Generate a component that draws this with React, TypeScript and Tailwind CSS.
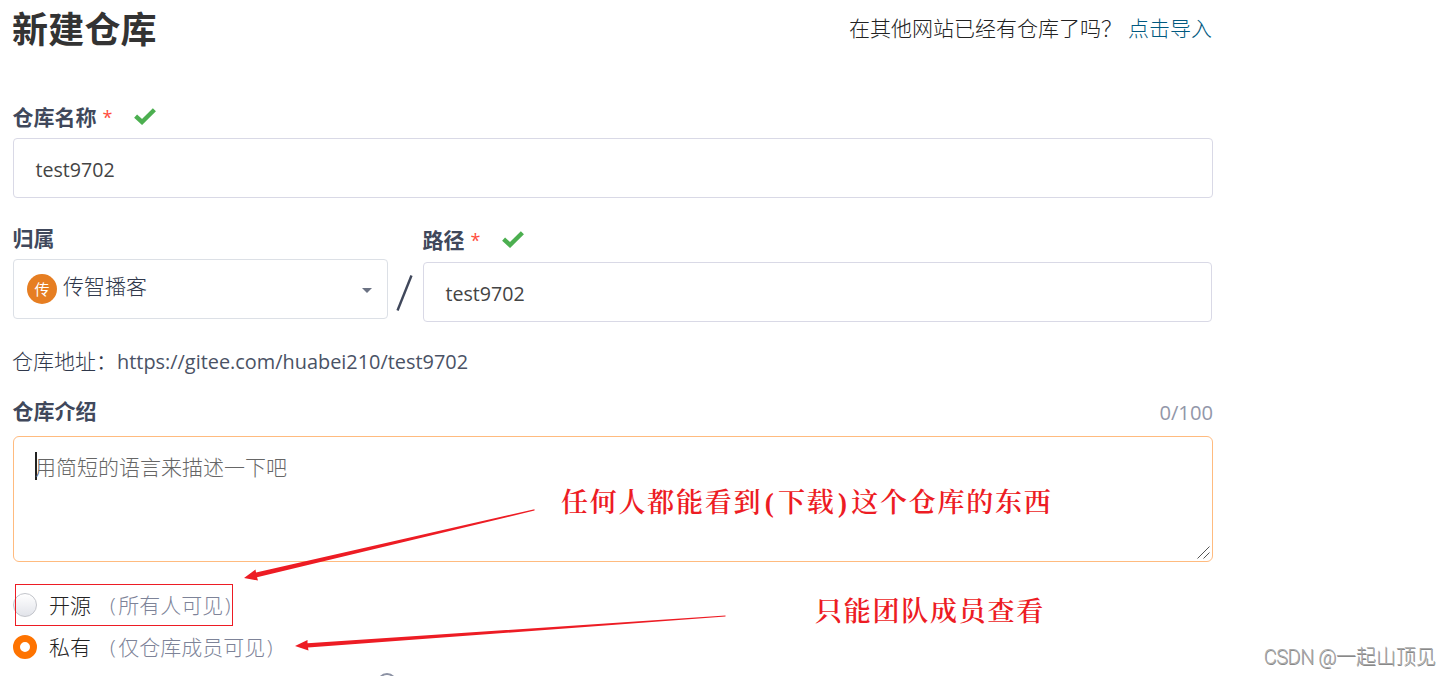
import React from 'react'
import clsx from 'clsx'

const Check = () => (
  <svg width="22" height="17" viewBox="0 0 22 17" fill="none" stroke="#4caf50" strokeWidth="4.4" className="-mt-0.5">
    <path d="M1.6 8.2 L8 14 L20.4 1.8" />
  </svg>
)

type LabelProps = {
  text: string
  className: string
  required?: boolean
}

const Label = ({ text, className, required }: LabelProps) => (
  <div className={clsx('flex items-center pb-0.5 font-bold', className)}>
    <span className="-ml-[0.5px]">{text}</span>
    {required && (
      <>
        <span className="ml-1.5 mr-[22px] text-lg leading-none font-normal text-[#ff4d3d]">*</span>
        <Check />
      </>
    )}
  </div>
)

const TextBox = ({ value }: { value: string }) => (
  <div className="flex h-15 items-center rounded border border-[#d9d9e6] px-[21px] text-[19.6px] text-[#444]">
    <span className="mt-1 ml-[0.5px]">{value}</span>
  </div>
)

type RadioProps = {
  text: string
  hint: string
  checked?: boolean
}

const Radio = ({ text, hint, checked }: RadioProps) => (
  <div className="flex h-[42px] items-center font-light">
    <span
      className={clsx(
        'h-6 w-6 rounded-full',
        checked ? 'border-[7px] border-[#fe7300] bg-white' : 'border border-[#c3c5cb] bg-linear-to-b from-white to-[#e2e4ea]'
      )}
    />
    <span className="mt-px ml-3 text-[#222]">{text}</span>
    <span className="mt-px ml-[19px] text-[#7d8398]">
      <span className="mr-[2.5px]">(</span>
      {hint}
      <span className="ml-[1.5px]">)</span>
    </span>
  </div>
)

const Arrows = () => (
  <svg className="absolute left-0 top-0" width="1451" height="676" viewBox="0 0 1451 676" fill="#ed1c24">
    <path d="M534.5 509.3 L256 572.5 L255.500 569.500 L244 578 L258 580.500 L257 577.300 L310 564.500 L534.500 510.600 Z" />
    <path d="M725.500 615.400 L307.500 643.300 L307.500 640 L295 646 L308.500 650.500 L308 647.600 L725.500 616.600 Z" />
  </svg>
)

const App = () => {
  return (
    <div className="relative h-[676px] w-full overflow-hidden bg-white font-['Open_Sans','Noto_Sans_CJK_SC',sans-serif] text-[21px] leading-none text-[#40485b]">
      <div className="ml-[13px] w-[1200px]">
        <div className="flex h-15 items-center justify-between text-[#333]">
          <h1 className="-ml-px text-4xl leading-none font-bold tracking-[0.2px]">新建仓库</h1>
          <p className="mb-1 mr-px font-light text-[#222]">
            在其他网站已经有仓库了吗？
            <a className="ml-1.5 text-[#005980]">点击导入</a>
          </p>
        </div>

        <Label text="仓库名称" className="mt-[38px] h-10" required />
        <TextBox value="test9702" />

        <div className="flex">
          <div className="w-[375px] pt-[21px]">
            <Label text="归属" className="h-10" />
            <div className="flex h-15 items-center rounded-sm border border-[#dce0e6] pl-[13px] pr-[15px]">
              <span className="flex h-[30px] w-[30px] items-center justify-center rounded-full bg-[#e67e22] text-[15px] text-white">
                传
              </span>
              <span className="mb-1.5 ml-1.5 flex-1 font-light text-[#30384b]">传智播客</span>
              <span className="mt-0.5 border-x-[5.5px] border-t-[5.5px] border-x-transparent border-t-[#6b7283]" />
            </div>
          </div>
          <div className="flex w-[35px] justify-center pr-[3px] pt-[76px]">
            <svg width="17" height="38" viewBox="0 0 17 38" stroke="#40485b" strokeWidth="2.4">
              <path d="M1.500 36.500 L15.500 1.500" />
            </svg>
          </div>
          <div className="w-[789px] pt-[22px]">
            <Label text="路径" className="h-[42px]" required />
            <TextBox value="test9702" />
          </div>
        </div>

        <div className="mt-[19px] -ml-px flex h-10 items-center font-light text-[#30384b]">
          仓库地址：
          <span className="mt-px text-[19.9px] font-normal text-[#4a5265]">https://gitee.com/huabei210/test9702</span>
        </div>

        <div className="mt-[7px] flex h-12 items-center justify-between">
          <Label text="仓库介绍" className="h-12" />
          <span className="text-[20.2px] text-[#9297a9]">0/100</span>
        </div>
        <div className="relative h-[126px] rounded-md border border-[#ffbb7f] px-[21px] pt-[15px]">
          <div className="flex h-7 items-center border-l-2 border-[#222] pt-0.5 font-light text-[#666]">
            <span className="-ml-0.5">用简短的语言来描述一下吧</span>
          </div>
          <svg className="absolute bottom-0.5 right-0.5" width="13" height="13" viewBox="0 0 13 13" stroke="#555">
            <path d="M0.500 12.500 L12.500 0.500 M6.500 12.500 L12.500 6.500" />
          </svg>
        </div>

        <div className="mt-[22px]">
          <Radio text="开源" hint="所有人可见" />
          <Radio text="私有" hint="仅仓库成员可见" checked />
        </div>
        <div className="ml-[364px] mt-[5px] h-5 w-5 rounded-full border-2 border-[#8c92a4]" />
      </div>

      {/* annotations */}
      <div className="absolute left-[15px] top-[584px] h-[42px] w-[218px] border border-[#ed1c24]" />
      <Arrows />
      <p className="absolute left-[561px] top-[490px] whitespace-nowrap font-['Liberation_Serif','Noto_Serif_CJK_SC','Noto_Sans_CJK_SC',serif] text-[27px] font-semibold tracking-[1.75px] text-[#ed1c24]">
        任何人都能看到<span className="mx-[2.5px]">(</span>下载<span className="mx-[2.5px]">)</span>这个仓库的东西
      </p>
      <p className="absolute left-[815px] top-[599px] whitespace-nowrap font-['Liberation_Serif','Noto_Serif_CJK_SC','Noto_Sans_CJK_SC',serif] text-[27px] font-semibold tracking-[1.75px] text-[#ed1c24]">
        只能团队成员查看
      </p>
      <p className="absolute right-[15px] top-[647px] whitespace-nowrap font-[Roboto,'Noto_Sans_CJK_SC',sans-serif] text-[20px] font-light text-[#aaa] [text-shadow:0.5px_0.5px_0_#888]">
        <span className="tracking-[-0.5px]">CSDN @</span>一起山顶见
      </p>
    </div>
  )
}

export default App
